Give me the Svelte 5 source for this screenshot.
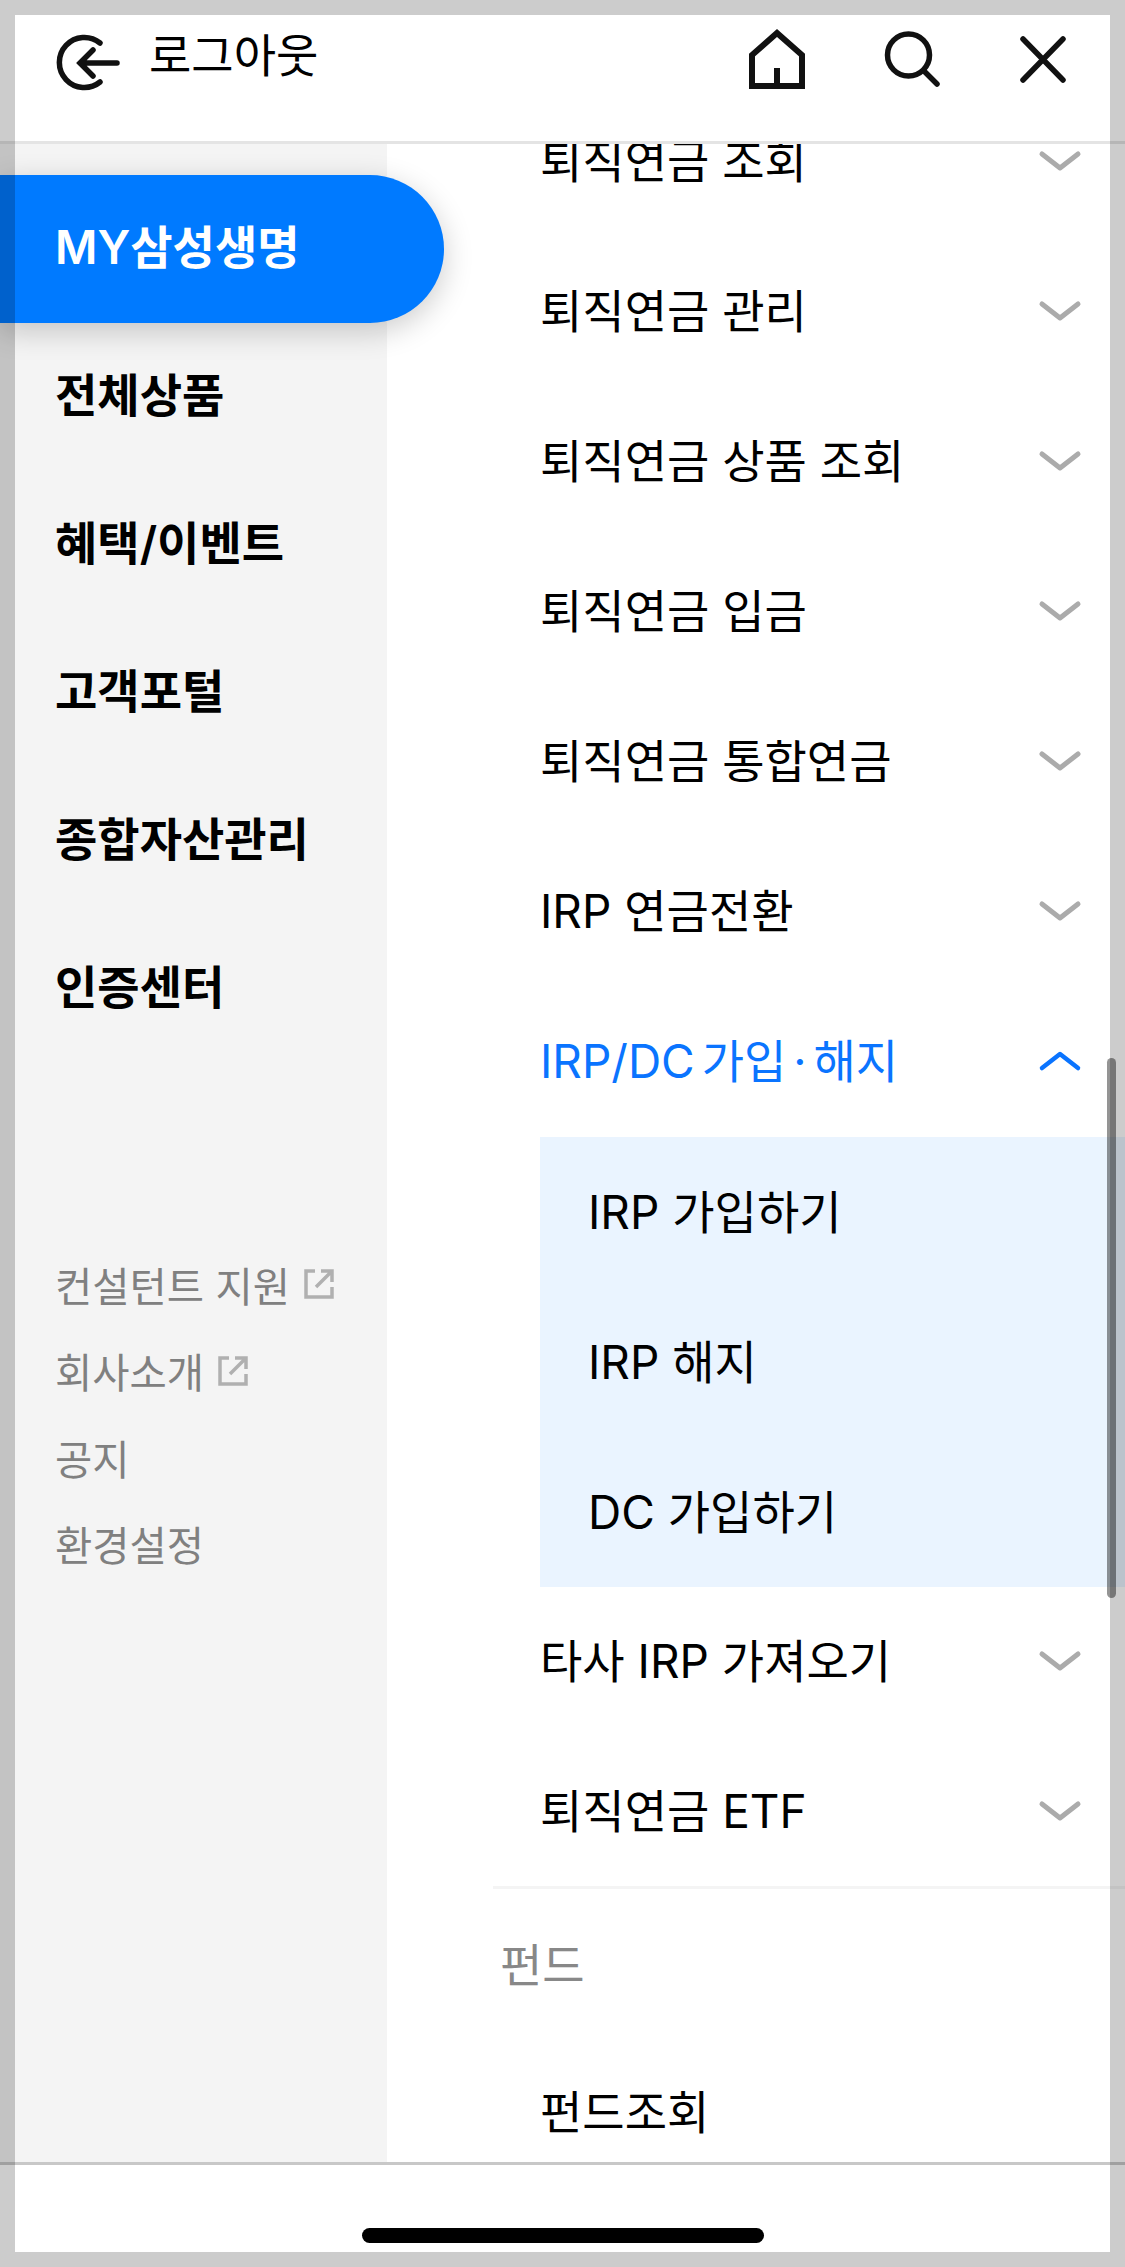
<script>
  const sideItems = ["MY삼성생명", "전체상품", "혜택/이벤트", "고객포털", "종합자산관리", "인증센터"];
  const sideLinks = [
    { label: "컨설턴트 지원", external: true },
    { label: "회사소개", external: true },
    { label: "공지", external: false },
    { label: "환경설정", external: false },
  ];
  const pensionTop = [
    "퇴직연금 조회",
    "퇴직연금 관리",
    "퇴직연금 상품 조회",
    "퇴직연금 입금",
    "퇴직연금 통합연금",
    "IRP 연금전환",
  ];
  const openSubs = ["IRP 가입하기", "IRP 해지", "DC 가입하기"];
  const pensionBottom = ["타사 IRP 가져오기", "퇴직연금 ETF"];
</script>

{#snippet chevron(up)}
  <svg class="chevron" class:up viewBox="0 0 44 22" width="44" height="22" aria-hidden="true">
    <path d={up ? "M4 18 22 4 40 18" : "M4 4 22 18 40 4"} />
  </svg>
{/snippet}

<div class="phone">
  <header class="topbar">
    <svg class="icon" viewBox="52 25 70 68" width="70" height="68" aria-hidden="true">
      <path d="M100 43A25 25 0 1 0 100 82" />
      <path d="M117 63H80M93 50 80 63 93 76" />
    </svg>
    <span class="logout">로그아웃</span>
    <div class="topbar__right">
      <svg class="icon" viewBox="745 25 64 68" width="64" height="68" aria-hidden="true">
        <path class="miter" d="M752 86V55L777 33 802 55V86ZM777 68V86" />
      </svg>
      <svg class="icon" viewBox="880 25 60 68" width="60" height="68" aria-hidden="true">
        <circle cx="906.5" cy="55" r="21" />
        <path d="M923 72 935 84" />
      </svg>
      <svg class="icon" viewBox="1015 25 56 68" width="56" height="68" aria-hidden="true">
        <path d="M1023 39 1063 80M1063 39 1023 80" />
      </svg>
    </div>
  </header>

  <div class="body">
    <nav class="side">
      <ul class="side__menu">
        {#each sideItems as item, i}
          <li class="side__item" class:active={i === 0}>{item}</li>
        {/each}
      </ul>
      <ul class="side__links">
        {#each sideLinks as link}
          <li class="side__link">
            {link.label}
            {#if link.external}
              <svg class="ext" viewBox="0 0 30 30" width="30" height="30" aria-hidden="true">
                <path d="M11 2H2V28H28V18M17 2H28V13M28 2 12 18" />
              </svg>
            {/if}
          </li>
        {/each}
      </ul>
    </nav>

    <main class="content">
      <ul class="list">
        {#each pensionTop as row}
          <li class="row"><span class="label">{row}</span>{@render chevron(false)}</li>
        {/each}
        <li class="row row--open"><span class="label">IRP/DC 가입 · 해지</span>{@render chevron(true)}</li>
        <li class="subs">
          {#each openSubs as sub}
            <div class="sub">{sub}</div>
          {/each}
        </li>
        {#each pensionBottom as row}
          <li class="row"><span class="label">{row}</span>{@render chevron(false)}</li>
        {/each}
      </ul>
      <div class="divider"></div>
      <div class="group">펀드</div>
      <div class="row"><span class="label">펀드조회</span></div>
    </main>
  </div>

  <footer class="bottom">
    <div class="homebar"></div>
  </footer>

  <div class="mat"></div>
  <div class="scrollbar"></div>
</div>

<style>
  :global(body) {
    margin: 0;
  }

  ul {
    list-style: none;
    margin: 0;
    padding: 0;
  }

  .phone {
    position: relative;
    display: flex;
    flex-direction: column;
    width: 1125px;
    height: 2267px;
    overflow: hidden;
    background: #fff;
    color: #000;
    font-family: Inter, "Noto Sans CJK KR", sans-serif;
    font-size: 46px;
  }

  .topbar {
    position: relative;
    z-index: 3;
    display: flex;
    align-items: flex-start;
    flex: none;
    box-sizing: border-box;
    height: 144px;
    padding: 25px 54px 0 52px;
    background: #fff;
    border-bottom: 3px solid #e4e4e4;
  }

  .icon {
    flex: none;
    fill: none;
    stroke: #111;
    stroke-width: 5.5;
    stroke-linecap: round;
  }

  .miter {
    stroke-linecap: butt;
    stroke-width: 6;
  }

  .logout {
    margin-left: 27px;
    line-height: 60px;
  }

  .topbar__right {
    display: flex;
    gap: 73px;
    margin-left: auto;
  }

  .body {
    display: flex;
    flex: 1;
    min-height: 0;
  }

  .side {
    position: relative;
    z-index: 2;
    flex: none;
    width: 387px;
    padding-top: 31px;
    background: #f4f4f4;
  }

  .side__item {
    box-sizing: border-box;
    height: 148px;
    padding-left: 55px;
    line-height: 144px;
    font-weight: 600;
    white-space: nowrap;
  }

  .side__item.active {
    width: 444px;
    background: #007aff;
    border-radius: 0 74px 74px 0;
    box-shadow: 0 8px 30px rgba(0, 0, 0, 0.2);
    color: #fff;
  }

  .side__links {
    margin-top: 178px;
    padding-left: 55px;
    color: #808080;
    font-size: 40.5px;
  }

  .side__link {
    display: flex;
    align-items: center;
    gap: 14px;
    height: 86.5px;
    white-space: nowrap;
  }

  .ext {
    fill: none;
    stroke: #b0b0b0;
    stroke-width: 3.5;
  }

  .content {
    flex: 1;
    min-width: 0;
    overflow: hidden;
  }

  .list {
    margin-top: -58px;
  }

  .row {
    display: flex;
    align-items: center;
    justify-content: space-between;
    box-sizing: border-box;
    height: 150px;
    padding: 0 43px 0 153px;
  }

  /* labels sit a touch above the row centre, chevrons do not */
  .label {
    position: relative;
    top: -3px;
  }

  .row--open {
    color: #0a74ff;
    word-spacing: -6px;
  }

  .chevron {
    flex: none;
    fill: none;
    stroke: #ababab;
    stroke-width: 5;
    stroke-linecap: round;
    stroke-linejoin: round;
  }

  .chevron.up {
    stroke: #0a74ff;
    stroke-width: 4.5;
  }

  .subs {
    margin: 1px 0 -1px 153px;
    background: #eaf4ff;
  }

  .sub {
    height: 150px;
    padding-left: 48px;
    line-height: 150px;
  }

  .divider {
    height: 3px;
    margin-left: 106px;
    background: #f4f4f4;
  }

  .group {
    height: 148px;
    margin-left: 113px;
    line-height: 152px;
    color: #888;
  }

  .bottom {
    position: relative;
    z-index: 3;
    display: flex;
    justify-content: center;
    flex: none;
    box-sizing: border-box;
    height: 105px;
    padding-top: 63px;
    background: #fff;
    border-top: 3px solid #c8c8c8;
  }

  .homebar {
    width: 402px;
    height: 15px;
    border-radius: 8px;
    background: #000;
  }

  /* translucent grey mat round the whole shot */
  .mat {
    position: absolute;
    inset: 0;
    z-index: 4;
    border: 15px solid rgba(0, 0, 0, 0.2);
    pointer-events: none;
  }

  .scrollbar {
    position: absolute;
    top: 1058px;
    left: 1107px;
    z-index: 5;
    width: 9px;
    height: 540px;
    border-radius: 5px;
    background: rgba(0, 0, 0, 0.42);
  }
</style>
